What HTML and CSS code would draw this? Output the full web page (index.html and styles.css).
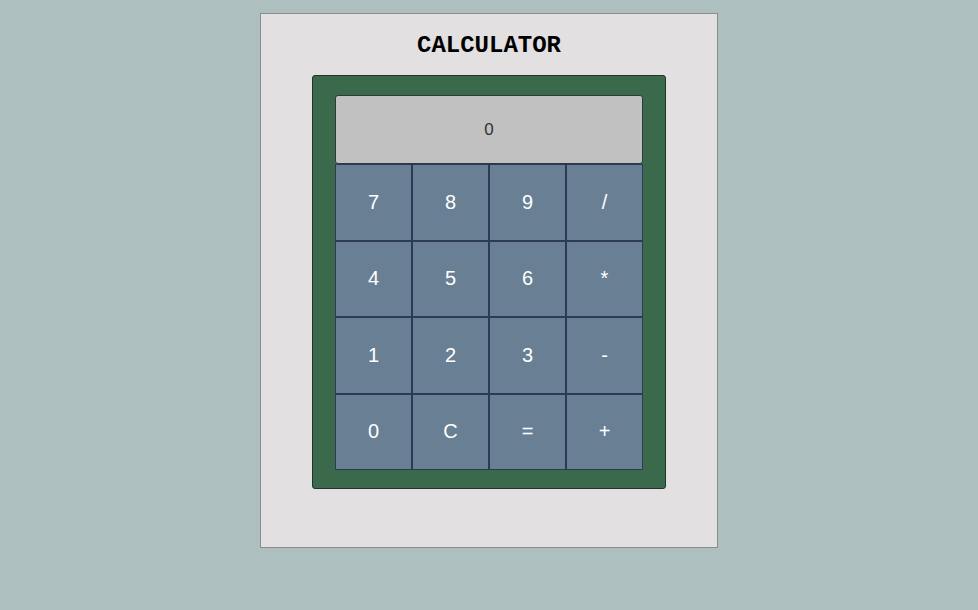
FILE: index.html
```html
<!DOCTYPE html>
<html>
<head>
<meta charset="utf-8">
<link rel="stylesheet" href="styles.css">
</head>
<body>
<div class="panel">
  <h1 class="title">CALCULATOR</h1>
  <div class="calc">
    <div class="display">0</div>
    <div class="keys">
      <button class="key">7</button>
      <button class="key">8</button>
      <button class="key">9</button>
      <button class="key">/</button>
      <button class="key">4</button>
      <button class="key">5</button>
      <button class="key">6</button>
      <button class="key">*</button>
      <button class="key">1</button>
      <button class="key">2</button>
      <button class="key">3</button>
      <button class="key">-</button>
      <button class="key">0</button>
      <button class="key">C</button>
      <button class="key">=</button>
      <button class="key">+</button>
    </div>
  </div>
</div>
</body>
</html>
```
FILE: styles.css
```css
html, body {
  margin: 0;
  padding: 0;
}
body {
  background: #aebfbf;
  font-family: "Liberation Sans", Arial, sans-serif;
  padding-top: 13px;
}
.panel {
  width: 456px;
  height: 533px;
  margin: 0 auto;
  background: #e2e0e1;
  border: 1px solid #8c8c8c;
  display: flex;
  flex-direction: column;
  align-items: center;
}
.title {
  margin: 20px 0 0;
  height: 41px;
  font-family: "Courier New", "Liberation Mono", monospace;
  font-weight: bold;
  font-size: 24px;
  line-height: 24px;
  color: #000;
}
.calc {
  width: 308px;
  padding: 19px 22px 18px;
  background: #3a6a4b;
  border: 1px solid #23332a;
  border-radius: 3px;
}
.display {
  height: 67px;
  background: #c1c1c1;
  border: 1px solid #2f3b3a;
  border-radius: 3px;
  display: flex;
  align-items: center;
  justify-content: center;
  font-size: 17px;
  color: #333;
}
.keys {
  display: grid;
  grid-template-columns: repeat(4, 77px);
  grid-template-rows: repeat(4, 76.5px);
}
.key {
  margin: 0;
  padding: 0;
  background: #687f94;
  border: 1px solid #2d3a55;
  color: #fff;
  font-family: "Liberation Sans", Arial, sans-serif;
  font-size: 20px;
  border-radius: 0;
}
```
